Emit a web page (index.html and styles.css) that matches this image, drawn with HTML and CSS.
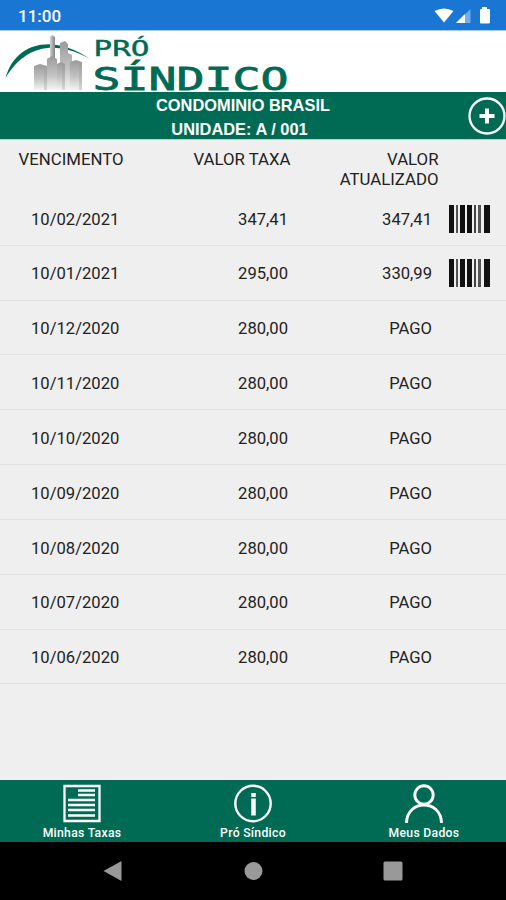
FILE: index.html
```html
<!DOCTYPE html>
<html lang="pt-BR">
<head>
<meta charset="utf-8">
<title>Pró Síndico</title>
<link rel="stylesheet" href="styles.css">
</head>
<body>
<div class="phone">
  <div class="status">
    <span class="clock">11:00</span>
    <svg class="status-icons" width="58" height="18" viewBox="0 0 58 18">
      <path d="M.5 4Q10-1 19.500 4L10 15.500Z" fill="#fff"/>
      <path d="M22 16L36.500 2V16Z" fill="#75acec"/>
      <path d="M22 16L31 7V16Z" fill="#fff"/>
      <path d="M48 0h5v2h2q1 0 1 1v12.500q0 1-1 1h-8q-1 0-1-1V3q0-1 1-1h1z" fill="#fff"/>
    </svg>
  </div>
  <header class="brand">
    <svg width="300" height="61" viewBox="0 31 300 61">
      <defs>
        <linearGradient id="tower" x1="0" y1="0" x2="0" y2="1">
          <stop offset="0" stop-color="#9a9a9a"/><stop offset=".55" stop-color="#c2c2c2"/><stop offset="1" stop-color="#f4f4f4"/>
        </linearGradient>
        <linearGradient id="side" x1="0" y1="0" x2="1" y2="0">
          <stop offset="0" stop-color="#d0d0d0"/><stop offset="1" stop-color="#858585"/>
        </linearGradient>
      </defs>
      <path d="M5.500 78C16 41 54 34 90 59C54 39 25 46 5.500 78Z" fill="#006b54"/>
      <path d="M50 37l2-2 3 2v21h-5z" fill="url(#side)"/>
      <path d="M60 43l5-2 3 3v9l4 2v35H60z" fill="url(#tower)"/>
      <path d="M47 59l5-3 5 3v31H47z" fill="url(#tower)"/>
      <path d="M57 64l4-2 4 2v26h-8z" fill="url(#tower)"/>
      <path d="M34 66l6-2 7 2v24H34z" fill="url(#tower)"/>
      <path d="M70 62l6-2 6 2v28H70z" fill="url(#tower)"/>
      <path d="M44 66l3 1v23h-3zM62 64l3 1v25h-3zM79 61l3 2v27h-3z" fill="#999" opacity=".3"/>
      <text class="logo-text small" x="93.500" y="56" font-size="20.500" textLength="56" lengthAdjust="spacingAndGlyphs">PRÓ</text>
      <text class="logo-text" x="92.500" y="89.500" font-size="32" textLength="196" lengthAdjust="spacingAndGlyphs">SÍNDICO</text>
    </svg>
  </header>
  <div class="unit">
    <div class="unit-name"><div>CONDOMINIO BRASIL</div><div class="unit-number">UNIDADE: A / 001</div></div>
    <svg class="add" width="38" height="38" viewBox="0 0 38 38" fill="none" stroke="#fff">
      <circle cx="19" cy="19" r="17.500" stroke-width="2.300"/>
      <path d="M11.500 19h15M19 11.500v15" stroke-width="4"/>
    </svg>
  </div>
  <main>
    <div class="head"><span>VENCIMENTO</span><span>VALOR TAXA</span><span>VALOR<br>ATUALIZADO</span></div>
    <div class="row"><span>10/02/2021</span><span>347,41</span><span>347,41</span><i class="barcode"></i></div>
    <div class="row"><span>10/01/2021</span><span>295,00</span><span>330,99</span><i class="barcode"></i></div>
    <div class="row"><span>10/12/2020</span><span>280,00</span><span>PAGO</span></div>
    <div class="row"><span>10/11/2020</span><span>280,00</span><span>PAGO</span></div>
    <div class="row"><span>10/10/2020</span><span>280,00</span><span>PAGO</span></div>
    <div class="row"><span>10/09/2020</span><span>280,00</span><span>PAGO</span></div>
    <div class="row"><span>10/08/2020</span><span>280,00</span><span>PAGO</span></div>
    <div class="row"><span>10/07/2020</span><span>280,00</span><span>PAGO</span></div>
    <div class="row"><span>10/06/2020</span><span>280,00</span><span>PAGO</span></div>
  </main>
  <nav class="tabs">
    <a class="tab">
      <svg width="40" height="40" viewBox="0 0 40 40" fill="none" stroke="#fff">
        <path d="M2.500 2h35v35h-35z" stroke-width="2.300"/>
        <path d="M16 6.500h17M16 11h17M6 16h27M6 21h27M6 26h27M6 31.500h27" stroke-width="2.600"/>
      </svg>
      <span>Minhas Taxas</span>
    </a>
    <a class="tab">
      <svg width="40" height="40" viewBox="0 0 40 40" fill="none" stroke="#fff">
        <circle cx="20" cy="19.500" r="17.700" stroke-width="2.400"/>
        <path d="M20.500 9v4M20.500 14.500v17" stroke-width="4.500"/>
      </svg>
      <span>Pró Síndico</span>
    </a>
    <a class="tab">
      <svg width="40" height="40" viewBox="0 0 40 40" fill="none" stroke="#fff" stroke-width="2.900">
        <circle cx="20" cy="11" r="9.200"/>
        <path d="M2.500 39C3 15 37 15 37.500 39"/>
      </svg>
      <span>Meus Dados</span>
    </a>
  </nav>
  <div class="system">
    <svg width="20" height="22" viewBox="0 0 20 22"><path d="M.5 11L18.500 1V21Z" fill="#999"/></svg>
    <svg width="20" height="22" viewBox="0 0 20 22"><circle cx="10.500" cy="11" r="9" fill="#999"/></svg>
    <svg width="20" height="22" viewBox="0 0 20 22"><rect x=".5" y="1.500" width="19" height="19" rx="1.500" fill="#999"/></svg>
  </div>
</div>
</body>
</html>
```
FILE: styles.css
```css
* { box-sizing: border-box; }
body { margin: 0; }
.phone {
  width: 506px;
  height: 900px;
  display: flex;
  flex-direction: column;
  background: #efefef;
  font-family: Roboto, sans-serif;
  color: #222;
  overflow: hidden;
}
.status {
  height: 31px;
  flex: none;
  display: flex;
  align-items: center;
  justify-content: space-between;
  padding: 1px 14.500px 0 18px;
  background: #1976d2;
  border-bottom: 1px solid #a9cbf0;
  color: #fff;
}
.clock { font-size: 17px; font-weight: 500; }
.brand { height: 61px; flex: none; background: #fff; }
.brand svg { display: block; overflow: visible; }
.logo-text {
  font-family: "DejaVu Sans Mono", monospace;
  fill: #006b54;
  stroke: #006b54;
  stroke-width: .8;
}
.logo-text.small { stroke-width: .4; }
.unit {
  height: 48px;
  flex: none;
  display: grid;
  grid-template-columns: 38px 1fr 38px;
  align-items: center;
  background: #006b54;
  border-bottom: 1px solid #b8d0c9;
  color: #fff;
}
.add { margin-bottom: 1px; }
.unit-name {
  grid-column: 2;
  padding: 2px 20px 0 0;
  text-align: center;
  font: 700 16.400px/23.500px "Liberation Sans", Arial, sans-serif;
}
.unit-number { padding-right: 7px; }
main { flex: 1; font-size: 16.600px; }
.head, .row { display: grid; grid-template-columns: 123.500px 167px 148px 1fr; }
.head { height: 51px; padding-top: 9px; line-height: 20px; text-align: right; font-size: 16.800px; }
.row {
  grid-template-columns: 119.300px 168.700px 144px 1fr;
  height: 54.830px;
  padding-top: 2.500px;
  align-items: center;
  border-bottom: 1px solid #e2e2e2;
  text-align: right;
}
.barcode {
  width: 42px;
  height: 28px;
  margin: 0 0 1px 17px;
  background: linear-gradient(90deg,
    #111 0 5px, transparent 5px 7px, #555 7px 9.500px, transparent 9.500px 11.500px,
    #111 11.500px 16px, transparent 16px 18.500px, #111 18.500px 23.500px, transparent 23.500px 25px,
    #444 25px 27.500px, transparent 27.500px 29.500px, #555 29.500px 32px, transparent 32px 35px,
    #111 35px 41.500px, transparent 41.500px);
}
.tabs {
  height: 62px;
  flex: none;
  display: grid;
  grid-template-columns: 164px 178px 1fr;
  background: #006b54;
  color: #fff;
}
.tab {
  display: flex;
  flex-direction: column;
  align-items: center;
  padding-top: 4px;
  font-size: 12.200px;
  line-height: 18px;
  font-weight: 500;
  letter-spacing: .3px;
}
.tab svg { flex: none; }
.system {
  height: 58px;
  flex: none;
  display: flex;
  justify-content: space-between;
  align-items: center;
  padding: 0 103px;
  background: #000;
}
```
